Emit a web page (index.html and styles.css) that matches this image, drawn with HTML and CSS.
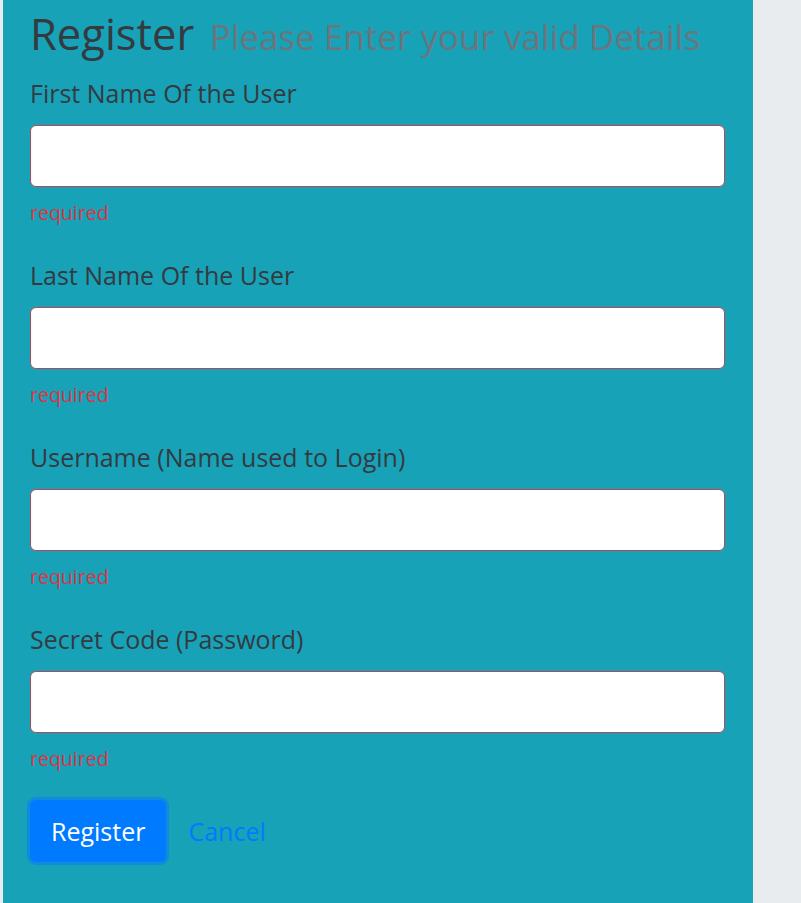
FILE: index.html
```html
<!DOCTYPE html>
<html lang="en">
<head>
<meta charset="utf-8">
<title>Register</title>
<link rel="stylesheet" href="styles.css">
</head>
<body>
<div class="panel">
  <h1 class="title">Register <small class="subtitle">Please Enter your valid Details</small></h1>
  <form class="form">
    <div class="group">
      <label class="label">First Name Of the User</label>
      <input class="input" type="text">
      <div class="error">required</div>
    </div>
    <div class="group">
      <label class="label">Last Name Of the User</label>
      <input class="input" type="text">
      <div class="error">required</div>
    </div>
    <div class="group">
      <label class="label">Username (Name used to Login)</label>
      <input class="input" type="text">
      <div class="error">required</div>
    </div>
    <div class="group">
      <label class="label">Secret Code (Password)</label>
      <input class="input" type="password">
      <div class="error">required</div>
    </div>
    <div class="actions">
      <button class="btn" type="button">Register</button>
      <a class="link" href="#">Cancel</a>
    </div>
  </form>
</div>
</body>
</html>
```
FILE: styles.css
```css
html, body {
  margin: 0;
  padding: 0;
}
body {
  background: #e9ecef;
  font-family: "Open Sans", "Noto Sans", sans-serif;
  color: #343a40;
  padding-left: 3px;
  overflow: hidden;
}
.panel {
  width: 750px;
  min-height: 903px;
  box-sizing: border-box;
  background: #17a2b8;
  padding: 0 28px 0 27px;
}
.title {
  margin: 0 0 8px;
  font-weight: 400;
  font-size: 43.5px;
  line-height: 67px;
  height: 67px;
  color: #343a40;
  white-space: nowrap;
}
.subtitle {
  font-size: 35px;
  line-height: 1;
  margin-left: 4px;
  color: #6c757d;
}
.form {
  display: flex;
  flex-direction: column;
}
.group {
  display: flex;
  flex-direction: column;
  margin-bottom: 30px;
}
.label {
  font-size: 25px;
  line-height: 36px;
  margin-bottom: 14px;
}
.input {
  height: 62px;
  box-sizing: border-box;
  border: 1px solid #b5475c;
  border-radius: 6px;
  background: #fff;
  margin: 0;
  padding: 0 18px;
  font-size: 25px;
}
.error {
  font-size: 19.5px;
  line-height: 30px;
  color: #dc3545;
  margin-top: 11px;
  margin-bottom: -1px;
}
.actions {
  display: flex;
  align-items: center;
  gap: 22px;
  margin-top: -3px;
}
.btn {
  height: 62px;
  padding: 0 21px;
  border: none;
  border-radius: 6px;
  background: #007bff;
  color: #fff;
  font-family: inherit;
  font-size: 25px;
  box-shadow: 0 0 0 3px #118cdc;
}
.link {
  color: #007bff;
  text-decoration: none;
  font-size: 25px;
}
```
